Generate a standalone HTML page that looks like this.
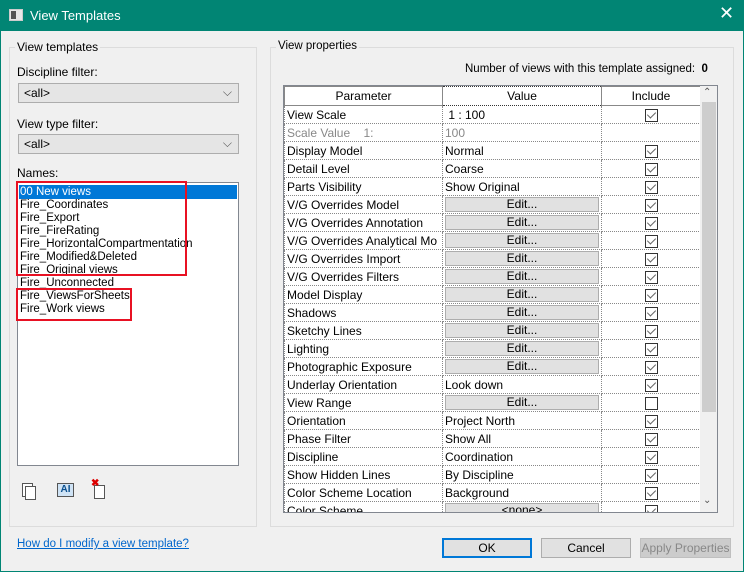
<!DOCTYPE html>
<html><head><style>
*{box-sizing:border-box;margin:0;padding:0}
body{width:744px;height:572px;overflow:hidden;background:#f0f0f0;font-family:"Liberation Sans",sans-serif;font-size:12px;color:#000;position:relative}
.a{position:absolute}
.win{left:0;top:0;width:744px;height:572px;border:1px solid #018574}
.title{left:0;top:0;width:744px;height:31px;background:#018574;color:#fff;font-size:13px}
.gb{border:1px solid #dcdcdc}
.lbl{background:#f0f0f0;padding:0 2px}
.combo{background:#e5e5e5;border:1px solid #adadad;height:20px;padding:2px 5px}
.list{background:#fff;border:1px solid #828790}
.li{position:absolute;left:2px;height:13px;line-height:13px;font-size:11.5px}
.red{border:2px solid #e81123}
table{border-collapse:collapse;table-layout:fixed}
td{height:18px;border:1px dotted #888;font-size:12px;padding:0 2px;white-space:nowrap;overflow:hidden;background:#fff}
th{height:19px;font-weight:normal;border:1px solid #888;background:#fff;font-size:12px}
.ed{background:#e1e1e1;border:1px solid #adadad;text-align:center;height:15px;line-height:13px}
.cb{display:inline-block;width:13px;height:13px;border:1px solid #333;position:relative;vertical-align:middle}
.cb.k:after{content:"";position:absolute;left:3px;top:0px;width:4px;height:7px;border:solid #666;border-width:0 1px 1px 0;transform:rotate(45deg)}
.btn{background:#e1e1e1;border:1px solid #adadad;text-align:center;line-height:18px;height:20px}
</style></head><body>
<div class="a win"></div>
<div class="a title"><div class="a" style="left:9px;top:9px;width:14px;height:12px;background:#e8e8e8;border:1px solid #ccc"><div class="a" style="left:1px;top:1px;width:5px;height:8px;background:#555"></div></div><div class="a" style="left:30px;top:8px">View Templates</div><div class="a" style="left:719px;top:3px;font-size:18px">✕</div></div>

<div class="a gb" style="left:9px;top:47px;width:248px;height:480px"></div>
<div class="a lbl" style="left:15px;top:40px">View templates</div>
<div class="a" style="left:17px;top:65px">Discipline filter:</div>
<div class="a combo" style="left:18px;top:83px;width:221px">&lt;all&gt;<span class="a" style="right:6px;top:1px;color:#555">⌵</span></div>
<div class="a" style="left:17px;top:117px">View type filter:</div>
<div class="a combo" style="left:18px;top:134px;width:221px">&lt;all&gt;<span class="a" style="right:6px;top:1px;color:#555">⌵</span></div>
<div class="a" style="left:17px;top:166px">Names:</div>
<div class="a list" style="left:17px;top:182px;width:222px;height:284px">
<div class="a" style="left:1px;top:2px;width:218px;height:14px;background:#0078d7"></div>
<div class="li" style="top:3px;color:#fff">00 New views</div>
<div class="li" style="top:16px">Fire_Coordinates</div>
<div class="li" style="top:29px">Fire_Export</div>
<div class="li" style="top:42px">Fire_FireRating</div>
<div class="li" style="top:55px">Fire_HorizontalCompartmentation</div>
<div class="li" style="top:68px">Fire_Modified&amp;Deleted</div>
<div class="li" style="top:81px">Fire_Original views</div>
<div class="li" style="top:94px">Fire_Unconnected</div>
<div class="li" style="top:107px">Fire_ViewsForSheets</div>
<div class="li" style="top:120px">Fire_Work views</div>
</div>
<div class="a red" style="left:16px;top:181px;width:171px;height:95px"></div>
<div class="a red" style="left:16px;top:288px;width:116px;height:33px"></div>
<div class="a" style="left:22px;top:483px;width:11px;height:14px;border:1px solid #555;background:#fff"></div>
<div class="a" style="left:25px;top:486px;width:11px;height:14px;border:1px solid #555;background:#fff"></div>
<div class="a" style="left:57px;top:483px;width:17px;height:14px;border:1px solid #555;background:#cfe3f5;font-size:10px;color:#0b4f8e;text-align:center;line-height:12px;font-weight:bold">AI</div>
<div class="a" style="left:94px;top:485px;width:11px;height:14px;border:1px solid #555;background:#fff"></div>
<div class="a" style="left:91px;top:478px;color:#d00;font-size:10px;font-weight:bold">✖</div>

<div class="a gb" style="left:270px;top:47px;width:464px;height:480px"></div>
<div class="a lbl" style="left:276px;top:40px;font-size:11.5px">View properties</div>
<div class="a" style="left:465px;top:63px;font-size:11.5px">Number of views with this template assigned:&nbsp; <b>0</b></div>
<div class="a" style="left:283px;top:85px;width:435px;height:428px;border:1px solid #828790;background:#fff;overflow:hidden">
<table class="a" style="left:0;top:0;width:416px">
<colgroup><col style="width:158px"><col style="width:159px"><col style="width:99px"></colgroup>
<tr><th>Parameter</th><th style="border:1px dotted #333">Value</th><th>Include</th></tr>
<tr><td>View Scale</td><td>&nbsp;1 : 100</td><td align="center"><span class="cb k"></span></td></tr>
<tr><td style="color:#888">Scale Value &nbsp;&nbsp; 1:</td><td style="color:#888">100</td><td></td></tr>
<tr><td>Display Model</td><td>Normal</td><td align="center"><span class="cb k"></span></td></tr>
<tr><td>Detail Level</td><td>Coarse</td><td align="center"><span class="cb k"></span></td></tr>
<tr><td>Parts Visibility</td><td>Show Original</td><td align="center"><span class="cb k"></span></td></tr>
<tr><td>V/G Overrides Model</td><td><div class="ed">Edit...</div></td><td align="center"><span class="cb k"></span></td></tr>
<tr><td>V/G Overrides Annotation</td><td><div class="ed">Edit...</div></td><td align="center"><span class="cb k"></span></td></tr>
<tr><td>V/G Overrides Analytical Mo</td><td><div class="ed">Edit...</div></td><td align="center"><span class="cb k"></span></td></tr>
<tr><td>V/G Overrides Import</td><td><div class="ed">Edit...</div></td><td align="center"><span class="cb k"></span></td></tr>
<tr><td>V/G Overrides Filters</td><td><div class="ed">Edit...</div></td><td align="center"><span class="cb k"></span></td></tr>
<tr><td>Model Display</td><td><div class="ed">Edit...</div></td><td align="center"><span class="cb k"></span></td></tr>
<tr><td>Shadows</td><td><div class="ed">Edit...</div></td><td align="center"><span class="cb k"></span></td></tr>
<tr><td>Sketchy Lines</td><td><div class="ed">Edit...</div></td><td align="center"><span class="cb k"></span></td></tr>
<tr><td>Lighting</td><td><div class="ed">Edit...</div></td><td align="center"><span class="cb k"></span></td></tr>
<tr><td>Photographic Exposure</td><td><div class="ed">Edit...</div></td><td align="center"><span class="cb k"></span></td></tr>
<tr><td>Underlay Orientation</td><td>Look down</td><td align="center"><span class="cb k"></span></td></tr>
<tr><td>View Range</td><td><div class="ed">Edit...</div></td><td align="center"><span class="cb"></span></td></tr>
<tr><td>Orientation</td><td>Project North</td><td align="center"><span class="cb k"></span></td></tr>
<tr><td>Phase Filter</td><td>Show All</td><td align="center"><span class="cb k"></span></td></tr>
<tr><td>Discipline</td><td>Coordination</td><td align="center"><span class="cb k"></span></td></tr>
<tr><td>Show Hidden Lines</td><td>By Discipline</td><td align="center"><span class="cb k"></span></td></tr>
<tr><td>Color Scheme Location</td><td>Background</td><td align="center"><span class="cb k"></span></td></tr>
<tr><td>Color Scheme</td><td><div class="ed">&lt;none&gt;</div></td><td align="center"><span class="cb k"></span></td></tr>
</table>
<div class="a" style="left:416px;top:0;width:17px;height:426px;background:#f0f0f0"></div>
<div class="a" style="left:418px;top:16px;width:14px;height:310px;background:#cdcdcd"></div>
<div class="a" style="left:419px;top:1px;font-size:10px;color:#555">⌃</div>
<div class="a" style="left:419px;top:409px;font-size:10px;color:#555">⌄</div>
</div>

<div class="a" style="left:17px;top:538px;color:#0066cc;text-decoration:underline;font-size:11.5px">How do I modify a view template?</div>
<div class="a btn" style="left:442px;top:538px;width:90px;border:2px solid #0078d7;line-height:16px">OK</div>
<div class="a btn" style="left:541px;top:538px;width:90px">Cancel</div>
<div class="a btn" style="left:640px;top:538px;width:91px;color:#888;background:#ccc;border-color:#bfbfbf">Apply Properties</div>
</body></html>
